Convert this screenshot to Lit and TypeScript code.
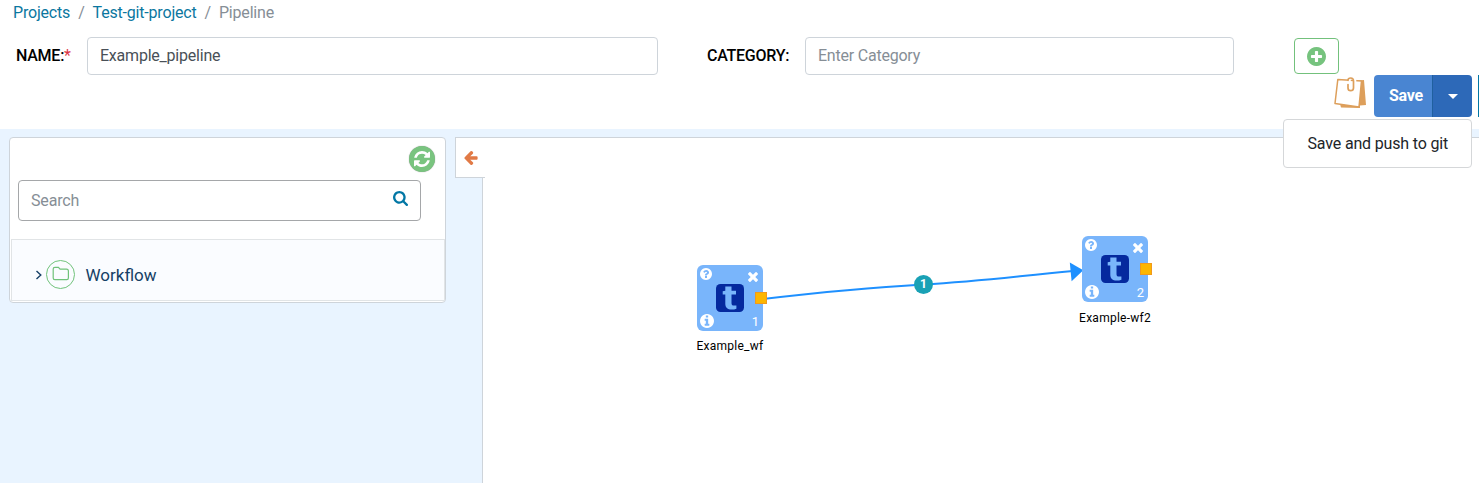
import { LitElement, html, svg, css } from "lit";
import { customElement, property } from "lit/decorators.js";

const DISC = "M1536 896q0 209-103 385.5T1153.5 1561 768 1664t-385.5-103T103 1281.5 0 896t103-385.5T382.5 231 768 128t385.5 103T1433 510.5 1536 896z";

const ICONS: Record<string, { box: string; d: string }> = {
  plus: {
    box: "0 128 1536 1536",
    d: "M1216 960V832q0-26-19-45t-45-19H896V512q0-26-19-45t-45-19H704q-26 0-45 19t-19 45v256H384q-26 0-45 19t-19 45v128q0 26 19 45t45 19h256v256q0 26 19 45t45 19h128q26 0 45-19t19-45v-256h256q26 0 45-19t19-45z" + DISC,
  },
  question: {
    box: "0 128 1536 1536",
    d: "M896 1376v-192q0-14-9-23t-23-9H672q-14 0-23 9t-9 23v192q0 14 9 23t23 9h192q14 0 23-9t9-23zm256-672q0-88-55.5-163T958 425t-170-41q-243 0-371 213-15 24 8 42l132 100q7 6 19 6 16 0 25-12 53-68 86-92 34-24 86-24 48 0 85.5 26t37.5 59q0 38-20 61t-68 45q-63 28-115.5 86.5T640 1020v36q0 14 9 23t23 9h192q14 0 23-9t9-23q0-19 21.5-49.5T972 957q32-18 49-28.5t46-35 44.5-48 28-60.5 12.5-81z" + DISC,
  },
  info: {
    box: "0 128 1536 1536",
    d: "M1024 1376v-160q0-14-9-23t-23-9h-96V672q0-14-9-23t-23-9H544q-14 0-23 9t-9 23v160q0 14 9 23t23 9h96v320h-96q-14 0-23 9t-9 23v160q0 14 9 23t23 9h448q14 0 23-9t9-23zM896 480V320q0-14-9-23t-23-9H672q-14 0-23 9t-9 23v160q0 14 9 23t23 9h192q14 0 23-9t9-23z" + DISC,
  },
  times: {
    box: "110 366 1188 1188",
    d: "M1298 1322q0 40-28 68l-136 136q-28 28-68 28t-68-28l-294-294-294 294q-28 28-68 28t-68-28L138 1390q-28-28-28-68t28-68l294-294-294-294q-28-28-28-68t28-68l136-136q28-28 68-28t68 28l294 294 294-294q28-28 68-28t68 28l136 136q28 28 28 68t-28 68l-294 294 294 294q28 28 28 68z",
  },
  search: {
    box: "0 128 1664 1664",
    d: "M1152 832q0-185-131.5-316.5T704 384 387.5 515.5 256 832t131.5 316.5T704 1280t316.5-131.5T1152 832zm512 832q0 52-38 90t-90 38q-54 0-90-38l-343-342q-179 124-399 124-143 0-273.5-55.5t-225-150-150-225T0 832t55.5-273.5 150-225 225-150T704 128t273.5 55.5 225 150 150 225T1408 832q0 220-124 399l343 343q37 37 37 90z",
  },
  refresh: {
    box: "0 128 1536 1536",
    d: "M1511 1056q0 5-1 7-64 268-268 434.5T764 1664q-146 0-282.5-55T238 1452l-129 129q-19 19-45 19t-45-19-19-45v-448q0-26 19-45t45-19h448q26 0 45 19t19 45-19 45l-137 137q71 66 161 102t187 36q134 0 250-65t186-179q11-17 53-117 8-23 30-23h192q13 0 22.5 9.5t9.5 22.5zm25-800v448q0 26-19 45t-45 19h-448q-26 0-45-19t-19-45 19-45l138-138Q969 384 768 384q-134 0-250 65T332 628q-11 17-53 117-8 23-30 23H50q-13 0-22.5-9.5T18 736v-7q65-268 270-434.5T768 128q146 0 284 55.5T1297 340l130-129q19-19 45-19t45 19 19 45z",
  },
  back: {
    box: "0 181 1472 1558",
    d: "M1472 896v128q0 53-32.5 90.5T1355 1152H651l293 294q38 36 38 90t-38 90l-75 76q-37 37-90 37-52 0-91-37L37 1050Q0 1013 0 960q0-52 37-91l651-650q38-38 91-38 52 0 90 38l75 74q38 38 38 91t-38 91L651 768h704q52 0 84.5 37.5T1472 896z",
  },
};

const icon = (name: string, size: number) => html`<svg width=${size} height=${size} viewBox=${ICONS[name].box}>
  <path fill="currentColor" fill-rule="evenodd" d=${ICONS[name].d}></path>
</svg>`;

@customElement("pipeline-node")
export class PipelineNode extends LitElement {
  @property() label = "";
  @property({ type: Number }) index = 0;

  static styles = css`
    :host { display: block; position: relative; width: 66px; height: 66px; border-radius: 6px; background: #79b5fb; color: #fff; }
    svg { display: block; }
    .corner { position: absolute; }
    .help { left: 3px; top: 3px; }
    .close { right: 5px; top: 7px; }
    .info { left: 3px; bottom: 3px; }
    .num { right: 4px; bottom: 1px; font-size: 13px; line-height: 17px; }
    .logo { position: absolute; left: 19px; top: 19px; }
    .port { position: absolute; left: 58px; top: 27px; width: 12px; height: 12px; box-sizing: border-box; background: #fdb600; border: 1px solid #f19a1c; }
    .label { position: absolute; left: 50%; top: var(--label-top, 73px); transform: translateX(-50%); color: #000; font-size: 12px; line-height: 16px; white-space: nowrap; letter-spacing: 0.25px; }
  `;

  render() {
    return html`
      <span class="corner help">${icon("question", 12)}</span>
      <span class="corner close">${icon("times", 10)}</span>
      <svg class="logo" width="28" height="28" viewBox="0 0 28 28">
        <rect width="28" height="28" rx="4.5" fill="#05299e"></rect>
        <path fill="#79b5fb" d="M9.300 2.400h6.200v4.300h4.500v3.800h-4.500v8.500c0 1.800.8 2.600 2.400 2.600h2.500v3.200c-1.500.6-3 .8-4.600.8-4.300 0-6.500-1.900-6.500-5.800v-9.300H6.700V7.200l2.600-.5z"></path>
      </svg>
      <span class="corner info">${icon("info", 14)}</span>
      <span class="corner num">${this.index}</span>
      <span class="port"></span>
      <span class="label">${this.label}</span>
    `;
  }
}

@customElement("app-root")
export class AppRoot extends LitElement {
  static styles = css`
    :host { display: flex; flex-direction: column; height: 483px; overflow: hidden; position: relative; background: #fff; font: 16px/24px Roboto, sans-serif; color: #212529; }
    * { box-sizing: border-box; }
    svg { display: block; flex: none; }
    .crumbs { display: flex; gap: 8px; height: 37px; padding: 1px 0 0 13px; color: #868e96; letter-spacing: -0.19px; }
    .crumbs .link { color: #0b779f; }
    .form { display: flex; align-items: flex-start; height: 38px; padding-left: 16px; }
    .lbl { color: #000; font-weight: 500; font-size: 16px; line-height: 37px; letter-spacing: -0.25px; }
    .name-lbl { width: 71px; }
    .cat-lbl { width: 98px; margin-left: 49px; }
    .req { color: #dc3545; font-weight: 400; }
    .input { height: 38px; border: 1px solid #ced4da; border-radius: 4px; padding: 0 12px; line-height: 35px; color: #495057; background: #fff; letter-spacing: -0.22px; }
    .name { width: 571px; }
    .cat { width: 429px; }
    .ph { color: #868e96; }
    .add { display: flex; align-items: center; justify-content: center; width: 45px; height: 36px; margin: 1px 0 0 60px; border: 1px solid #73c17c; border-radius: 4px; color: #76c37e; }
    .actions { display: flex; height: 54px; justify-content: flex-end; align-items: flex-start; }
    .note { margin: 2px 8px 0 0; }
    .save { display: flex; height: 42px; width: 98px; border-radius: 4px; overflow: hidden; color: #fff; margin-right: 6px; }
    .save-main { width: 58px; padding-left: 15px; background: #4985d2; font-weight: 700; line-height: 41px; letter-spacing: -0.3px; }
    .save-more { flex: 1; display: flex; align-items: center; justify-content: center; background: #2d69b8; border-left: 1px solid #20609f; }
    .caret { border: 5px solid transparent; border-top-color: #fff; border-bottom: 0; }
    .next { width: 1px; height: 42px; background: #0277a5; }
    .menu { position: absolute; left: 1283px; top: 119px; width: 189px; height: 49px; border: 1px solid #d5d7d9; border-radius: 4px; background: #fff; padding-left: 23.500px; line-height: 47px; z-index: 5; white-space: nowrap; letter-spacing: -0.16px; }
    .work { flex: 1; display: flex; background: #e9f4ff; padding-top: 8px; padding-left: 9px; align-items: stretch; }
    .panel { width: 437px; height: 166px; border: 1px solid #ced4da; border-radius: 4px; background: #fff; display: flex; flex-direction: column; padding: 8px 0 1px 1px; }
    .refresh { align-self: flex-end; display: flex; align-items: center; justify-content: center; width: 26px; height: 26px; margin-right: 10.500px; border-radius: 50%; background: #79c47f; box-shadow: 0 0 1px #888; color: #fff; }
    .search { width: 403px; height: 41px; margin: 8px 0 18px 7px; border: 1px solid #a5a7a9; border-radius: 4px; display: flex; justify-content: space-between; padding: 0 12px 0 12px; line-height: 39px; color: #868e96; letter-spacing: -0.15px; }
    .search svg { color: #0277a5; margin-top: 10px; }
    .tree { flex: 1; border: 1px solid #e1e4e6; background: #fafcff; display: flex; align-items: center; padding: 9px 0 0 23px; color: #153f66; }
    .folder { margin: 0 10.500px 0 3px; }
    .tree .txt { font-size: 17px; }
    .toggle { width: 30px; height: 41px; margin: 0 -3px 0 9px; border: 1px solid #ced4da; border-right: 0; background: #fff; color: #e17a46; display: flex; align-items: center; padding-left: 7.500px; position: relative; z-index: 2; }
    .canvas { flex: 1; position: relative; background: #fff; border-top: 1px solid #ced4da; border-left: 1px solid #ced4da; }
    .edge { position: absolute; left: 0; top: 0; }
    pipeline-node { position: absolute; }
    .n1 { left: 214px; top: 127px; }
    .n2 { left: 599px; top: 98px; --label-top: 74px; }
    .badge { position: absolute; left: 431px; top: 137px; width: 19px; height: 19px; border-radius: 50%; background: #19a1b5; color: #fff; font-size: 12px; font-weight: 700; line-height: 19px; text-align: center; }
  `;

  render() {
    return html`
      <nav class="crumbs">
        <span class="link">Projects</span><span>/</span><span class="link">Test-git-project</span><span>/</span><span>Pipeline</span>
      </nav>
      <div class="form">
        <span class="lbl name-lbl">NAME:<span class="req">*</span></span>
        <div class="input name">Example_pipeline</div>
        <span class="lbl cat-lbl">CATEGORY:</span>
        <div class="input cat ph">Enter Category</div>
        <div class="add">${icon("plus", 19)}</div>
      </div>
      <div class="actions">
        <svg class="note" width="32" height="32" viewBox="0 0 32 32">
          <path fill="#dd9f5b" d="M24 3.500l6-.5 2 25-6 .5zM6 27l20-1v5L7 30.500z"></path>
          <path fill="#fff" stroke="#dd9f5b" stroke-width="1.500" stroke-linejoin="round" d="M3.800 2.500L27.500 4 25 30 1 26.500z"></path>
          <path fill="none" stroke="#fff" stroke-width="2.500" d="M15.500 1.500v4M21 2v3"></path>
          <path fill="none" stroke="#dd9f5b" stroke-width="1.700" stroke-linecap="round" d="M14 7.500v3.500q0 2.700 2.700 2.700T19.500 11V4q0-3-2.800-3t-2.700 2.300"></path>
        </svg>
        <div class="save">
          <span class="save-main">Save</span>
          <span class="save-more"><i class="caret"></i></span>
        </div>
        <span class="next"></span>
      </div>
      <div class="menu">Save and push to git</div>
      <div class="work">
        <aside class="panel">
          <span class="refresh">${icon("refresh", 16)}</span>
          <div class="search"><span>Search</span>${icon("search", 15)}</div>
          <div class="tree">
            <svg width="8" height="10" viewBox="0 0 8 10"><path fill="none" stroke="#153f66" stroke-width="1.400" d="M1.500 1l4.300 4-4.300 4"></path></svg>
            <svg class="folder" width="29" height="29" viewBox="0 0 29 29" fill="none" stroke="#70c27a">
              <circle cx="14.500" cy="14.500" r="14"></circle>
              <path d="M7.200 9q0-1.700 1.700-1.700h3.500l1.700 1.900h6.400q1.900 0 1.900 1.900v7q0 1.600-1.600 1.600H8.800q-1.600 0-1.600-1.600z" stroke-width="1.200"></path>
            </svg>
            <span class="txt">Workflow</span>
          </div>
        </aside>
        <div class="toggle">${icon("back", 14)}</div>
        <main class="canvas">
          <svg class="edge" width="700" height="300" viewBox="0 0 700 300">
            ${svg`<path d="M280 161C340 154 380 150 440 146.500S530 138.500 590 133" fill="none" stroke="#1e90ff" stroke-width="2"></path>
            <path d="M586.800 124.500L600.300 132.300 588.600 143.300z" fill="#1e90ff"></path>`}
          </svg>
          <pipeline-node class="n1" label="Example_wf" index="1"></pipeline-node>
          <pipeline-node class="n2" label="Example-wf2" index="2"></pipeline-node>
          <span class="badge">1</span>
        </main>
      </div>
    `;
  }
}
